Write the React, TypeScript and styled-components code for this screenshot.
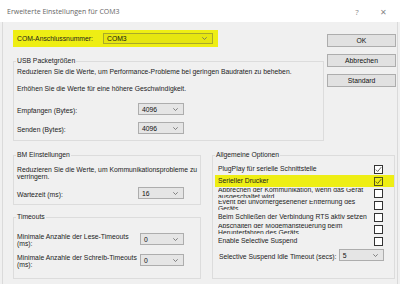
import React from 'react';
import styled, { createGlobalStyle } from 'styled-components';

const Global = createGlobalStyle`
  html, body { margin: 0; padding: 0; }
  body {
    width: 400px; height: 284px; overflow: hidden; background: #f0f0f0;
    font-family: "Liberation Sans", Arial, sans-serif; font-size: 6.8px; color: #1c1c1c;
  }
  * { box-sizing: border-box; }
`;

const Window = styled.div`
  width: 400px; height: 284px; display: flex; flex-direction: column; background: #f0f0f0;
`;
const TitleBar = styled.div`
  height: 22px; flex-shrink: 0; background: #fff; display: flex; align-items: center;
  padding: 0 4px 0 7px; color: #666; font-family: "Open Sans", "Liberation Sans", sans-serif; font-size: 7px;
`;
const Title = styled.div` flex: 1; `;
const TitleButton = styled.span`
  width: 26px; text-align: center; color: #888; font-size: 8px;
`;
const Body = styled.div`
  flex: 1; margin: 0 2px; border-left: 1px solid #dadada; border-right: 1px solid #dadada;
  padding: 8px 1px 0 10px; display: flex; flex-direction: column;
`;
const TopSection = styled.div` display: flex; gap: 3px; `;
const LeftColumn = styled.div` width: 311px; display: flex; flex-direction: column; `;
const ComRow = styled.div`
  width: 205px; height: 17px; background: #eeee14; display: flex; align-items: center; padding-left: 4px;
`;
const ComLabel = styled.span` width: 86px; `;
const ButtonColumn = styled.div`
  width: 69px; padding-top: 4px; display: flex; flex-direction: column; gap: 7px;
`;
const Button = styled.button`
  height: 13px; border: 1px solid #adadad; background: #e1e1e1; font: inherit; color: #111; padding: 0;
`;
const Group = styled.div<{ $h: number; $pt: number; $w?: number; $mt?: number }>`
  position: relative; height: ${p => p.$h}px; ${p => (p.$w ? `width: ${p.$w}px;` : '')}
  margin-top: ${p => p.$mt ?? 0}px;
  border: 1px solid #dcdcdc; padding: ${p => p.$pt}px 0 0 3px; display: flex; flex-direction: column;
`;
const Legend = styled.span`
  position: absolute; left: 2px; top: -5px; padding: 0 1px; background: #f0f0f0; line-height: 8px;
`;
const Para = styled.div<{ $mt?: number; $lh?: number }>`
  line-height: ${p => p.$lh ?? 8}px; margin-top: ${p => p.$mt ?? 0}px; padding-right: 1px;
`;
const FieldRow = styled.div<{ $mt?: number }>`
  display: flex; align-items: center; height: 12px; margin-top: ${p => p.$mt ?? 0}px;
`;
const FieldLabel = styled.div<{ $w: number }>`
  width: ${p => p.$w}px; line-height: 7px; padding-top: 2px;
`;
const SelectBox = styled.div<{ $w: number; $hl?: boolean }>`
  width: ${p => p.$w}px; height: ${p => (p.$hl ? 11 : 12)}px; display: flex; align-items: center; justify-content: space-between;
  border: 1px solid ${p => (p.$hl ? '#a9a92a' : '#adadad')}; background: ${p => (p.$hl ? '#e6e610' : '#e5e5e5')};
  padding: 0 5px 0 3px; color: #111;
`;
const BottomSection = styled.div` display: flex; gap: 11px; margin-top: 14px; `;
const LeftStack = styled.div` width: 188px; display: flex; flex-direction: column; gap: 12px; `;
const OptionRow = styled.div<{ $hl?: boolean }>`
  height: 12px; display: flex; align-items: center; justify-content: space-between;
  padding: 0 11px 0 3px; margin-left: -1px;
  background: ${p => (p.$hl ? '#eeee14' : 'transparent')};
`;
const OptionLabel = styled.div`
  width: 152px; height: 10px; overflow: hidden; display: flex; align-items: center; line-height: 7.5px;
`;
const Box = styled.div<{ $hl?: boolean }>`
  width: 9px; height: 9px; border: 1px solid ${p => (p.$hl ? '#55551a' : '#333')};
  background: ${p => (p.$hl ? '#eeee14' : '#fff')}; display: flex; align-items: center; justify-content: center;
`;
const SuspendRow = styled.div`
  display: flex; align-items: center; height: 12px; margin-top: 2px; padding: 0 10px 0 3px;
`;

const Chevron = () => (
  <svg width="5" height="3" viewBox="0 0 5 3">
    <polyline points="0.3,0.3 2.5,2.5 4.7,0.3" fill="none" stroke="#666" strokeWidth="0.8" />
  </svg>
);

const Select = ({ value, w, hl }: { value: string; w: number; hl?: boolean }) => (
  <SelectBox $w={w} $hl={hl}>
    <span>{value}</span>
    <Chevron />
  </SelectBox>
);

const Check = ({ checked, hl }: { checked?: boolean; hl?: boolean }) => (
  <Box $hl={hl}>
    {checked && (
      <svg width="7" height="7" viewBox="0 0 7 7">
        <polyline points="0.8,3.6 2.7,5.5 6.2,1.2" fill="none" stroke={hl ? '#55551a' : '#555'} strokeWidth="0.9" />
      </svg>
    )}
  </Box>
);

const options: { label: string; checked?: boolean; hl?: boolean }[] = [
  { label: 'PlugPlay für serielle Schnittstelle', checked: true },
  { label: 'Serieller Drucker', checked: true, hl: true },
  { label: 'Abbrechen der Kommunikation, wenn das Gerät ausgeschaltet wird' },
  { label: 'Event bei unvorhergesehener Entfernung des Geräts' },
  { label: 'Beim Schließen der Verbindung RTS aktiv setzen' },
  { label: 'Abschalten der Modemansteuerung beim Herunterfahren des Geräts' },
  { label: 'Enable Selective Suspend' },
];

export default function App() {
  return (
    <Window>
      <Global />
      <TitleBar>
        <Title>Erweiterte Einstellungen für COM3</Title>
        <TitleButton>?</TitleButton>
        <TitleButton>✕</TitleButton>
      </TitleBar>
      <Body>
        <TopSection>
          <LeftColumn>
            <ComRow>
              <ComLabel>COM-Anschlussnummer:</ComLabel>
              <Select value="COM3" w={110} hl />
            </ComRow>
            <Group $h={80} $pt={6} $mt={14}>
              <Legend>USB Packetgrößen</Legend>
              <Para>Reduzieren Sie die Werte, um Performance-Probleme bei geringen Baudraten zu beheben.</Para>
              <Para $mt={9}>Erhöhen Sie die Werte für eine höhere Geschwindigkeit.</Para>
              <FieldRow $mt={10}>
                <FieldLabel $w={121}>Empfangen (Bytes):</FieldLabel>
                <Select value="4096" w={46} />
              </FieldRow>
              <FieldRow $mt={7}>
                <FieldLabel $w={121}>Senden (Bytes):</FieldLabel>
                <Select value="4096" w={46} />
              </FieldRow>
            </Group>
          </LeftColumn>
          <ButtonColumn>
            <Button>OK</Button>
            <Button>Abbrechen</Button>
            <Button>Standard</Button>
          </ButtonColumn>
        </TopSection>
        <BottomSection>
          <LeftStack>
            <Group $h={50} $pt={10}>
              <Legend>BM Einstellungen</Legend>
              <Para $lh={7}>Reduzieren Sie die Werte, um Kommunikationsprobleme zu verringern.</Para>
              <FieldRow $mt={7}>
                <FieldLabel $w={121}>Wartezeit (ms):</FieldLabel>
                <Select value="16" w={46} />
              </FieldRow>
            </Group>
            <Group $h={62} $pt={15}>
              <Legend>Timeouts</Legend>
              <FieldRow>
                <FieldLabel $w={123}>Minimale Anzahle der Lese-Timeouts (ms):</FieldLabel>
                <Select value="0" w={44} />
              </FieldRow>
              <FieldRow $mt={9}>
                <FieldLabel $w={123}>Minimale Anzahle der Schreib-Timeouts (ms):</FieldLabel>
                <Select value="0" w={44} />
              </FieldRow>
            </Group>
          </LeftStack>
          <Group $h={124} $pt={7} $w={183}>
            <Legend>Allgemeine Optionen</Legend>
            {options.map(o => (
              <OptionRow key={o.label} $hl={o.hl}>
                <OptionLabel>{o.label}</OptionLabel>
                <Check checked={o.checked} hl={o.hl} />
              </OptionRow>
            ))}
            <SuspendRow>
              <FieldLabel $w={122}>Selective Suspend Idle Timeout (secs):</FieldLabel>
              <Select value="5" w={46} />
            </SuspendRow>
          </Group>
        </BottomSection>
      </Body>
    </Window>
  );
}
